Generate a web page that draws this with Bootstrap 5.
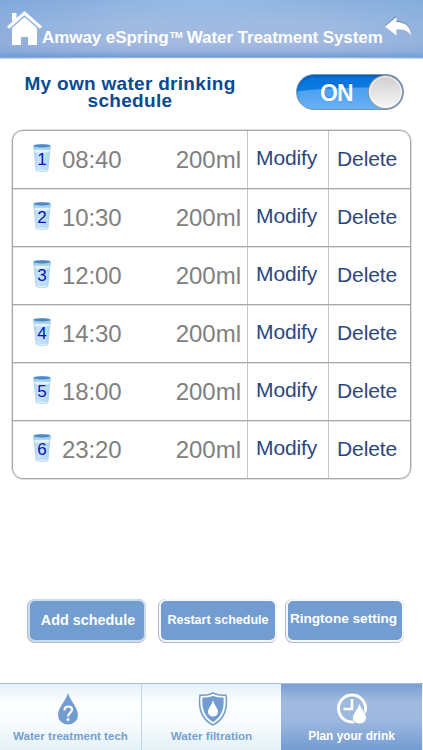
<!DOCTYPE html>
<html lang="en">
<head>
<meta charset="utf-8">
<meta name="viewport" content="width=device-width, initial-scale=1">
<title>Plan your drink</title>
<link href="https://cdn.jsdelivr.net/npm/bootstrap@5.3.0/dist/css/bootstrap.min.css" rel="stylesheet">
<style>
body{font-family:"Liberation Sans",Arial,sans-serif;height:750px;overflow:hidden;background:#fff}
svg{display:block;flex:none}
.topbar{height:59px;background:radial-gradient(ellipse 130px 30px at 205px 0,rgba(157,197,238,.45),transparent),linear-gradient(90deg,rgba(110,152,214,.35),transparent 30%,transparent 75%,rgba(120,165,216,.35)),linear-gradient(#8cb2e0,#9fbbe1 40%,#a3b9e0 75%,#94b1dc 88%,#6f99d2 97%,#6f99d2 57px,#dce8f7 58px,#f2f7fc);color:#fff}
.topbar h1{font-size:17px;line-height:20px;margin:28px 0 0 0;width:342px;letter-spacing:-.08px}
.topbar .tm{font-size:9.5px;vertical-align:5px;line-height:1;margin:0 4.5px 0 1px;letter-spacing:-.5px;font-weight:700}
.home-ic{margin:11px 0 0 7px}
.back-ic{margin:16px 0 0 0}
.intro{height:71px}
.intro h2{font-size:19px;line-height:17px;color:#0a4a91;margin:16px 0 0 19px;width:222px;letter-spacing:.3px}
.toggle{width:108px;height:36px;margin:15px 0 0 55px;border:1px solid #7892b3;border-radius:18px;background:radial-gradient(ellipse 130px 24px at 70px 36px,rgba(160,210,255,.45) 96%,transparent 100%),linear-gradient(#0873dd 0,#0b7be2 50%,#3f98ec 100%);color:#fff;font-weight:700;font-size:23px;line-height:37px;padding-left:23px;letter-spacing:-1px;box-shadow:inset 0 2px 2px rgba(0,50,120,.35);text-shadow:0 -1px 1px rgba(0,60,140,.4)}
.knob{width:35px;height:34px;border-radius:50%;background:linear-gradient(#cfcfcf,#f7f7f7);border:1px solid #999;box-shadow:inset 0 0 1px 1px #fff}
.plan{width:399px;margin-left:12px;border:1px solid #a6a6a6;border-radius:11px;height:349px;box-shadow:0 0 0 .5px #c4c4c4}
.slot{height:58px;border-bottom:1px solid #a6a6a6;box-shadow:0 .5px 0 #c4c4c4}
.slot:last-child{border:0;box-shadow:none}
.slot .info{width:234px;color:#808080;font-size:24px;line-height:28px}
.slot .act{color:#2b4782;font-size:21px;line-height:28px;border-left:1px solid #c6c6c6;height:57px;letter-spacing:-.1px;text-decoration:none}
.cup{width:20px;height:30px;margin:12px 0 0 19px}
.cup text{font:17px "Liberation Sans",Arial,sans-serif;fill:#1010b4}
.time{margin:15px 0 0 10px;width:65px;letter-spacing:-.1px}
.amount{margin:15px 6px 0 auto;letter-spacing:0}
.modify{width:81px;padding:13px 0 0 8px}
.delete{width:81px;padding:14px 0 0 8px}
.actions{height:204px;padding:120px 0 0 28px}
.act-btn{width:118px;height:43px;padding:0;border:2px solid #f4f8fc;border-radius:7px;background:#739dd1;color:#fff;font-weight:700;line-height:1;box-shadow:-.5px .5px 0 .5px #b4bac5;white-space:nowrap}
.act-btn:hover{background:#739dd1;color:#fff}
.b1{font-size:14.4px;border-color:#cbdcf2;margin-right:13px;padding-left:2px}
.b2{font-size:12.5px;letter-spacing:.03px;margin-right:9px}
.b3{font-size:13.6px;padding-bottom:4px;padding-right:3px}
.tabs{height:67px;border-top:1px solid #a3bfdf;background:linear-gradient(#e4f2f9,#fdfeff 30%,#f8fcfe 60%,#e3f1f6)}
.tab{color:#779fd2;font-weight:700;font-size:11.6px;line-height:14px;text-decoration:none}
.tab span{margin-top:3px;white-space:nowrap}
.tab svg{margin-top:8px}
.tab-a{width:142px;border-right:1px solid #bfd6ea}
.tab-b{width:139px}
.tab-c{width:141px;color:#fff;font-size:11.9px;background:linear-gradient(#799fd4,#a1badf 28%,#9cb8df 55%,#749cd2)}
.tab-a svg{margin-right:6px}
.tab-b svg{margin-left:2px}
</style>
<script src="https://cdn.jsdelivr.net/npm/bootstrap@5.3.0/dist/js/bootstrap.bundle.min.js"></script>
</head>
<body>
<header class="topbar d-flex">
  <svg class="home-ic" width="35" height="36" viewBox="0 0 35 36" fill="#fff"><path d="M5 2h4.500v5L5 11z"/><path d="M0 15.500 17.500 0 35 15.500l-2 2.200L17.500 4.200 2 17.700z"/><path d="M5 17 17.500 6 30 17V34h-9v-8h-7v8H5z"/></svg>
  <h1 class="fw-bold text-nowrap">Amway eSpring<span class="tm">TM</span>Water Treatment System</h1>
  <svg class="back-ic" width="28" height="21" viewBox="0 0 28 21"><path d="M1 9.500 12.500 0v5C21 5 27 10 27 19c-3-5-8-7-14.500-6v5z" fill="#61738f" opacity=".75"/><path d="M1 10.500 12.500 1v5C21 6 27 11 27 19.500c-3-5-8-7-14.500-6v6z" fill="#fff"/></svg>
</header>
<section class="intro d-flex">
  <h2 class="fw-bold text-center">My own water drinking schedule</h2>
  <div class="toggle d-flex justify-content-between"><span>ON</span><span class="knob"></span></div>
</section>
<svg width="0" height="0" class="position-absolute"><defs>
  <linearGradient id="glass"><stop offset="0" stop-color="#a6cfef"/><stop offset=".25" stop-color="#c5e2f8"/><stop offset=".75" stop-color="#b8dcf6"/><stop offset="1" stop-color="#a6cfef"/></linearGradient>
  <g id="cup"><path d="M1.500 5h17L16.500 27q-.5 2-6.500 2t-6.500-2z" fill="url(#glass)"/><path d="M2.500 7h15l-.3 2.500H2.800z" fill="#e4f2fb"/><path d="M5 27q5 1.500 10 0" stroke="#e4f3fc" fill="none"/><path d="M1 3q0-2 9-2t9 2v2q0 1.500-9 1.500T1 5z" fill="#a9cfed"/><ellipse cx="10" cy="2.800" rx="8.500" ry="1.600" fill="#4f8ac4"/></g>
</defs></svg>
<main class="plan">
  <div class="slot d-flex"><div class="info d-flex"><svg class="cup"><use href="#cup"/><text x="5.300" y="22">1</text></svg><span class="time">08:40</span><span class="amount">200ml</span></div><a class="act modify">Modify</a><a class="act delete">Delete</a></div>
  <div class="slot d-flex"><div class="info d-flex"><svg class="cup"><use href="#cup"/><text x="5.300" y="22">2</text></svg><span class="time">10:30</span><span class="amount">200ml</span></div><a class="act modify">Modify</a><a class="act delete">Delete</a></div>
  <div class="slot d-flex"><div class="info d-flex"><svg class="cup"><use href="#cup"/><text x="5.300" y="22">3</text></svg><span class="time">12:00</span><span class="amount">200ml</span></div><a class="act modify">Modify</a><a class="act delete">Delete</a></div>
  <div class="slot d-flex"><div class="info d-flex"><svg class="cup"><use href="#cup"/><text x="5.300" y="22">4</text></svg><span class="time">14:30</span><span class="amount">200ml</span></div><a class="act modify">Modify</a><a class="act delete">Delete</a></div>
  <div class="slot d-flex"><div class="info d-flex"><svg class="cup"><use href="#cup"/><text x="5.300" y="22">5</text></svg><span class="time">18:00</span><span class="amount">200ml</span></div><a class="act modify">Modify</a><a class="act delete">Delete</a></div>
  <div class="slot d-flex"><div class="info d-flex"><svg class="cup"><use href="#cup"/><text x="5.300" y="22">6</text></svg><span class="time">23:20</span><span class="amount">200ml</span></div><a class="act modify">Modify</a><a class="act delete">Delete</a></div>
</main>
<section class="actions d-flex">
  <button class="btn act-btn b1">Add schedule</button>
  <button class="btn act-btn b2">Restart schedule</button>
  <button class="btn act-btn b3">Ringtone setting</button>
</section>
<nav class="tabs d-flex">
  <a class="tab tab-a d-flex flex-column align-items-center">
    <svg width="22" height="34" viewBox="0 0 22 34"><path d="M11 1C9 8 1 16 1 23a10 9.500 0 0 0 20 0C21 16 13 8 11 1z" fill="#739dd1"/><path d="M7.500 18.500c0-5.500 8-5 7.500-.5-.3 3-4 3-4 6.500" fill="none" stroke="#fff" stroke-width="2.200"/><circle cx="11" cy="27.500" r="1.500" fill="#fff"/></svg>
    <span>Water treatment tech</span></a>
  <a class="tab tab-b d-flex flex-column align-items-center">
    <svg width="30" height="34" viewBox="0 0 30 34"><path d="M2 3q6 1 13-2 7 3 13 2 3 22-13 30Q-1 25 2 3z" fill="#f7fbff" stroke="#739dd1" stroke-width="1.500"/><path d="M4.500 5.500q5 .5 10.500-1.500 5.500 2 10.500 1.500Q27 23 15 30 3 23 4.500 5.500z" fill="#739dd1"/><path d="M15 8c-1 5-5 8-5 12a5 4.500 0 0 0 10 0c0-4-4-7-5-12z" fill="#fff"/></svg>
    <span>Water filtration</span></a>
  <a class="tab tab-c d-flex flex-column align-items-center">
    <svg width="32" height="34" viewBox="0 0 32 34"><circle cx="16" cy="16.500" r="13.500" fill="none" stroke="#fff" stroke-width="3"/><path d="M16 7v10H7.500" fill="none" stroke="#fff" stroke-width="2.600"/><path d="M23.500 10c-1 6-7 11-7 16a7 6 0 0 0 14 0c0-5-6-10-7-16z" fill="#fff" stroke="#9cb7df" stroke-width="1"/></svg>
    <span>Plan your drink</span></a>
</nav>
</body>
</html>
